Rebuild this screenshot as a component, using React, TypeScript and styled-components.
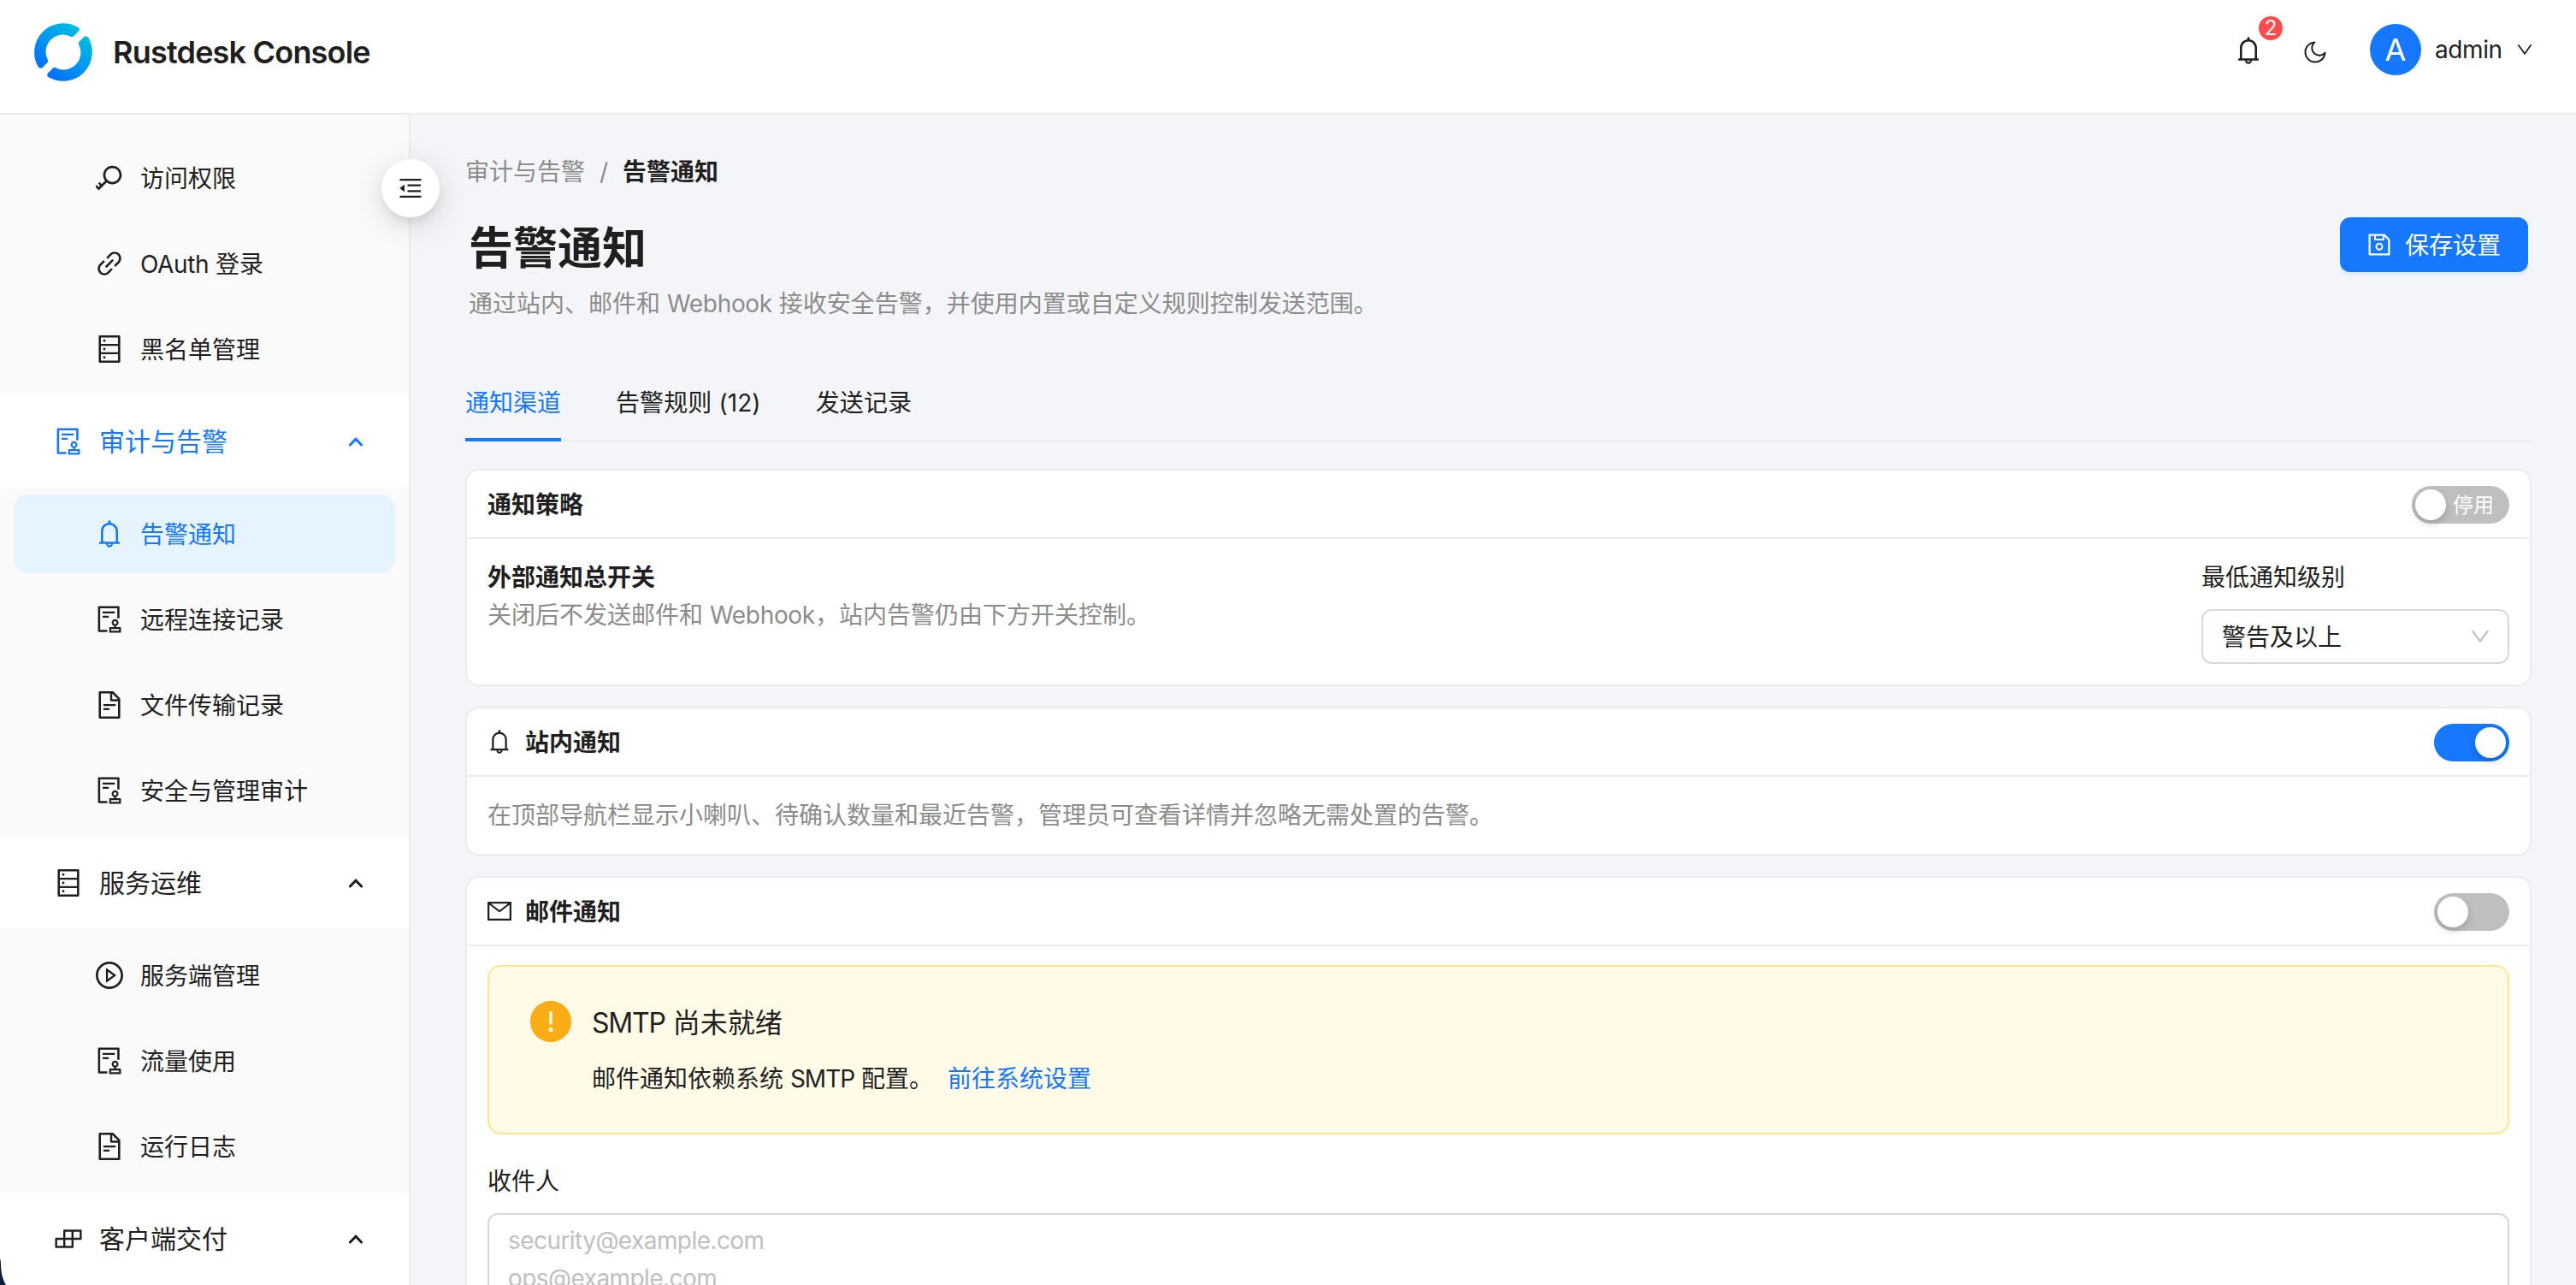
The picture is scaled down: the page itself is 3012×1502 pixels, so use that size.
import React from "react";
import styled, { createGlobalStyle, css } from "styled-components";
import {
  AiOutlineKey,
  AiOutlineLink,
  AiOutlineDatabase,
  AiOutlineAudit,
  AiOutlineBell,
  AiOutlineFileText,
  AiOutlinePlayCircle,
  AiOutlineBuild,
  AiOutlineMenuFold,
  AiOutlineMoon,
  AiOutlineDown,
  AiOutlineSave,
  AiOutlineMail,
  AiFillExclamationCircle,
} from "react-icons/ai";
import type { IconType } from "react-icons";

const colors = {
  primary: "#1677ff",
  text: "#1f1f1f",
  muted: "#8c8c8c",
  line: "#ebebf0",
  page: "#f4f5f9",
  placeholder: "#bfbfbf",
};

const GlobalStyle = createGlobalStyle`
  *, *::before, *::after { box-sizing: border-box; }
  body {
    margin: 0;
    overflow: hidden;
    background: ${colors.page};
    color: ${colors.text};
    font-family: Inter, "Noto Sans CJK SC", sans-serif;
    font-size: 28px;
    line-height: 44px;
    -webkit-font-smoothing: antialiased;
  }
`;

const Window = styled.div`
  position: relative;
  display: flex;
  flex-direction: column;
  width: 100vw;
  height: 100vh;
  overflow: hidden;
`;

const Header = styled.header`
  display: flex;
  flex: none;
  align-items: flex-start;
  justify-content: space-between;
  height: 134px;
  padding: 27px 50px 0 40px;
  background: #fff;
  border-bottom: 2px solid ${colors.line};
`;

const Brand = styled.div`
  display: flex;
  align-items: center;
  gap: 24px;
  height: 68px;
`;

const BrandName = styled.h1`
  margin: 0;
  font-size: 36px;
  font-weight: 600;
  letter-spacing: -0.8px;
`;

const HeaderActions = styled.div`
  display: flex;
  align-items: center;
  height: 62px;
`;

const IconSlot = styled.span<{ $size: number }>`
  display: inline-flex;
  flex: none;
  width: ${(p) => p.$size}px;
  height: ${(p) => p.$size}px;
  svg {
    width: 100%;
    height: 100%;
  }
`;

const BellButton = styled.div`
  position: relative;
  display: flex;
  margin: 2px 48px 0 0;
`;

const Badge = styled.span`
  position: absolute;
  left: 28px;
  top: -24px;
  width: 28px;
  height: 28px;
  border-radius: 50%;
  background: #ff4d4f;
  color: #fff;
  font-size: 24px;
  line-height: 28px;
  text-align: center;
`;

const MoonButton = styled.div`
  display: flex;
  margin: 6px 50px 0 0;
`;

const Avatar = styled.div`
  width: 60px;
  height: 60px;
  margin-right: 16px;
  border-radius: 50%;
  background: ${colors.primary};
  color: #fff;
  font-size: 36px;
  line-height: 60px;
  text-align: center;
`;

const UserName = styled.span`
  width: 79px;
  margin-right: 16px;
  letter-spacing: -0.4px;
`;

const Body = styled.div`
  display: flex;
  flex: 1;
  min-height: 0;
`;

const Sider = styled.aside`
  position: relative;
  flex: none;
  width: 480px;
  background: #fff;
  border-right: 2px solid ${colors.line};
`;

const CollapseButton = styled.button`
  position: absolute;
  top: 52px;
  right: -36px;
  display: flex;
  align-items: center;
  justify-content: center;
  width: 68px;
  height: 68px;
  padding: 0;
  border: 0;
  border-radius: 50%;
  background: #fff;
  color: ${colors.text};
  box-shadow: 0 8px 16px -6px rgba(0, 0, 0, 0.12), 0 8px 36px rgba(0, 0, 0, 0.14);
`;

const SubMenu = styled.ul<{ $scrolled?: boolean }>`
  display: flex;
  flex-direction: column;
  gap: 8px;
  margin: 0;
  padding: ${(p) => (p.$scrolled ? 28 : 8)}px 16px 8px;
  background: #fafafa;
  list-style: none;
`;

const MenuItem = styled.li<{ $active?: boolean }>`
  display: flex;
  align-items: center;
  gap: 20px;
  height: 92px;
  padding-left: 96px;
  border-radius: 16px;
  ${(p) =>
    p.$active &&
    css`
      background: #e6f4ff;
      color: ${colors.primary};
    `}
`;

const MenuTitle = styled.div<{ $active?: boolean }>`
  display: flex;
  align-items: center;
  gap: 20px;
  height: 108px;
  padding: 0 54px 0 64px;
  font-size: 30px;
  color: ${(p) => (p.$active ? colors.primary : colors.text)};
`;

const GroupLabel = styled.span`
  flex: 1;
`;

const MenuLabel = styled.span`
  flex: 1;
  padding-top: 2px;
`;

const Latin = styled.span<{ $tracking: number }>`
  letter-spacing: ${(p) => p.$tracking}px;
`;

const Main = styled.main`
  display: flex;
  flex: 1;
  flex-direction: column;
  min-width: 0;
  padding: 45px 52px 0 64px;
`;

const Breadcrumb = styled.nav`
  display: flex;
  gap: 17px;
  height: 44px;
  color: ${colors.muted};
`;

const Crumb = styled.span<{ $current?: boolean }>`
  ${(p) =>
    p.$current &&
    css`
      color: ${colors.text};
      font-weight: 600;
    `}
`;

const PageHeader = styled.div`
  display: flex;
  align-items: flex-start;
  justify-content: space-between;
  height: 154px;
  padding: 31px 4px 0;
`;

const PageTitle = styled.h2`
  margin: 1px 0 6px;
  font-size: 52px;
  font-weight: 600;
  line-height: 72px;
`;

const Muted = styled.div`
  color: ${colors.muted};
`;

const SaveButton = styled.button`
  display: flex;
  align-items: center;
  gap: 16px;
  height: 64px;
  padding: 0 32px;
  border: 0;
  border-radius: 12px;
  background: ${colors.primary};
  box-shadow: 0 4px 0 rgba(5, 145, 255, 0.1);
  color: #fff;
  font: inherit;
`;

const ButtonText = styled.span`
  padding-top: 2px;
`;

const Tabs = styled.div`
  display: flex;
  gap: 64px;
  height: 92px;
  margin: 47px 0 32px;
  border-bottom: 2px solid ${colors.line};
`;

const Tab = styled.div<{ $active?: boolean }>`
  height: 92px;
  padding-top: 25px;
  letter-spacing: 0.1px;
  ${(p) =>
    p.$active &&
    css`
      border-bottom: 4px solid ${colors.primary};
      color: ${colors.primary};
      letter-spacing: 0;
    `}
`;

const CardList = styled.div`
  display: flex;
  flex-direction: column;
  gap: 24px;
`;

const Card = styled.section`
  border: 2px solid ${colors.line};
  border-radius: 16px;
  background: #fff;
`;

const CardHead = styled.div`
  display: flex;
  align-items: center;
  justify-content: space-between;
  height: 80px;
  margin-bottom: -2px;
  padding: 2px 24px 0;
  border-bottom: 2px solid ${colors.line};
`;

const CardTitle = styled.h3`
  display: flex;
  align-items: center;
  gap: 16px;
  margin: 0;
  font-size: 28px;
  font-weight: 600;
`;

const TitleIcon = styled.span`
  display: flex;
  margin-top: -2px;
`;

const CardBody = styled.div`
  padding: 24px;
`;

const PolicyRow = styled.div`
  display: flex;
  justify-content: space-between;
  height: 124px;
`;

const PolicyText = styled.div`
  padding-top: 1px;
`;

const Strong = styled.div`
  font-weight: 600;
`;

const LevelField = styled.div`
  width: 360px;
  padding-top: 1px;
`;

const Select = styled.div`
  display: flex;
  align-items: center;
  justify-content: space-between;
  height: 64px;
  margin-top: 15px;
  padding: 0 20px 0 22px;
  border: 2px solid #d9d9d9;
  border-radius: 12px;
  svg {
    color: ${colors.placeholder};
  }
`;

const SelectValue = styled.span`
  padding-top: 1px;
`;

const InlineNote = styled(Muted)`
  height: 44px;
  padding-top: 1px;
`;

const SwitchTrack = styled.span<{ $on?: boolean }>`
  display: flex;
  flex-direction: ${(p) => (p.$on ? "row-reverse" : "row")};
  align-items: center;
  gap: 8px;
  min-width: 88px;
  height: 44px;
  padding: 0 4px;
  border-radius: 22px;
  background: ${(p) => (p.$on ? colors.primary : "#bfbfbf")};
`;

const SwitchKnob = styled.span`
  width: 36px;
  height: 36px;
  border-radius: 50%;
  background: #fff;
  box-shadow: 0 4px 8px rgba(0, 35, 11, 0.2);
`;

const SwitchText = styled.span`
  padding: 1px 14px 0 0;
  color: #fff;
  font-size: 24px;
`;

const Alert = styled.div`
  display: flex;
  gap: 24px;
  height: 198px;
  padding: 40px 48px;
  border: 2px solid #ffe58f;
  border-radius: 16px;
  background: #fffbe6;
`;

const WarningIcon = styled(IconSlot)`
  color: #faad14;
`;

const AlertTitle = styled.div`
  margin: 1px 0 15px;
  font-size: 32px;
  line-height: 50px;
`;

const AlertText = styled.div`
  display: flex;
  align-items: center;
  gap: 17px;
  height: 50px;
`;

const Link = styled.a`
  color: ${colors.primary};
`;

const FieldLabel = styled.label`
  display: block;
  margin: 33px 0 15px;
`;

const TextArea = styled.div`
  height: 200px;
  padding: 8px 22px;
  border: 2px solid #d9d9d9;
  border-radius: 12px;
  color: ${colors.placeholder};
  letter-spacing: -0.56px;
  white-space: pre-line;
`;

const WindowCorner = styled.svg`
  position: absolute;
  left: 0;
  bottom: 0;
  width: 8px;
  height: 44px;
`;

const Icon = ({ as: Glyph, size = 32 }: { as: IconType; size?: number }) => (
  <IconSlot $size={size}>
    <Glyph viewBox="64 64 896 896" />
  </IconSlot>
);

const ringHalf =
  "M50.6 4.4A34 34 0 0 0 4.4 50.6C5 52.4 7.7 53.8 9.6 52L14.8 46.8Q16.7 45 16.1 43.3A20 20 0 0 1 43.3 16.1Q45 16.7 46.8 14.8L52 9.6C53.8 7.7 52.4 5 50.6 4.4Z";

const Logo = () => (
  <svg width="68" height="68" viewBox="0 0 68 68">
    <defs>
      <linearGradient id="upper" x1="10" y1="56" x2="50" y2="6" gradientUnits="userSpaceOnUse">
        <stop offset="0" stopColor="#0071ff" />
        <stop offset="1" stopColor="#00bde1" />
      </linearGradient>
      <linearGradient id="lower" x1="50" y1="6" x2="10" y2="56" gradientUnits="userSpaceOnUse">
        <stop offset="0" stopColor="#0071ff" />
        <stop offset="1" stopColor="#00bde1" />
      </linearGradient>
    </defs>
    <path d={ringHalf} fill="url(#upper)" />
    <path d={ringHalf} fill="url(#lower)" transform="rotate(180 34 34)" />
  </svg>
);

const Caret = () => (
  <svg width="16" height="12" viewBox="0 0 16 12" fill="none">
    <path d="M1.4 10 8 3.2 14.6 10" stroke="currentColor" strokeWidth="3" strokeLinecap="round" />
  </svg>
);

const Switch = ({ on, text }: { on?: boolean; text?: string }) => (
  <SwitchTrack $on={on}>
    <SwitchKnob />
    {text && <SwitchText>{text}</SwitchText>}
  </SwitchTrack>
);

type Entry = { icon: IconType; label: React.ReactNode; active?: boolean };

const Entries = ({ items, scrolled }: { items: Entry[]; scrolled?: boolean }) => (
  <SubMenu $scrolled={scrolled}>
    {items.map((item, index) => (
      <MenuItem key={index} $active={item.active}>
        <Icon as={item.icon} />
        <MenuLabel>{item.label}</MenuLabel>
      </MenuItem>
    ))}
  </SubMenu>
);

const GroupTitle = ({ icon, label, active }: Entry) => (
  <MenuTitle $active={active}>
    <Icon as={icon} />
    <GroupLabel>{label}</GroupLabel>
    <Caret />
  </MenuTitle>
);

const accessItems: Entry[] = [
  { icon: AiOutlineKey, label: "访问权限" },
  {
    icon: AiOutlineLink,
    label: (
      <>
        <Latin $tracking={-0.4}>OAuth</Latin> 登录
      </>
    ),
  },
  { icon: AiOutlineDatabase, label: "黑名单管理" },
];

const auditItems: Entry[] = [
  { icon: AiOutlineBell, label: "告警通知", active: true },
  { icon: AiOutlineAudit, label: "远程连接记录" },
  { icon: AiOutlineFileText, label: "文件传输记录" },
  { icon: AiOutlineAudit, label: "安全与管理审计" },
];

const serviceItems: Entry[] = [
  { icon: AiOutlinePlayCircle, label: "服务端管理" },
  { icon: AiOutlineAudit, label: "流量使用" },
  { icon: AiOutlineFileText, label: "运行日志" },
];

export default function App() {
  return (
    <Window>
      <GlobalStyle />
      <Header>
        <Brand>
          <Logo />
          <BrandName>Rustdesk Console</BrandName>
        </Brand>
        <HeaderActions>
          <BellButton>
            <Icon as={AiOutlineBell} />
            <Badge>2</Badge>
          </BellButton>
          <MoonButton>
            <Icon as={AiOutlineMoon} size={28} />
          </MoonButton>
          <Avatar>A</Avatar>
          <UserName>admin</UserName>
          <Icon as={AiOutlineDown} size={20} />
        </HeaderActions>
      </Header>
      <Body>
        <Sider>
          <Entries items={accessItems} scrolled />
          <GroupTitle icon={AiOutlineAudit} label="审计与告警" active />
          <Entries items={auditItems} />
          <GroupTitle icon={AiOutlineDatabase} label="服务运维" />
          <Entries items={serviceItems} />
          <GroupTitle icon={AiOutlineBuild} label="客户端交付" />
          <CollapseButton>
            <Icon as={AiOutlineMenuFold} size={28} />
          </CollapseButton>
        </Sider>
        <Main>
          <Breadcrumb>
            <Crumb>审计与告警</Crumb>
            <span>/</span>
            <Crumb $current>告警通知</Crumb>
          </Breadcrumb>
          <PageHeader>
            <div>
              <PageTitle>告警通知</PageTitle>
              <Muted>
                通过站内、邮件和 <Latin $tracking={-0.3}>Webhook</Latin> 接收安全告警，并使用内置或自定义规则控制发送范围。
              </Muted>
            </div>
            <SaveButton>
              <Icon as={AiOutlineSave} size={28} />
              <ButtonText>保存设置</ButtonText>
            </SaveButton>
          </PageHeader>
          <Tabs>
            <Tab $active>通知渠道</Tab>
            <Tab>告警规则 (12)</Tab>
            <Tab>发送记录</Tab>
          </Tabs>
          <CardList>
            <Card>
              <CardHead>
                <CardTitle>通知策略</CardTitle>
                <Switch text="停用" />
              </CardHead>
              <CardBody>
                <PolicyRow>
                  <PolicyText>
                    <Strong>外部通知总开关</Strong>
                    <Muted>
                      关闭后不发送邮件和 <Latin $tracking={-0.3}>Webhook</Latin>，站内告警仍由下方开关控制。
                    </Muted>
                  </PolicyText>
                  <LevelField>
                    最低通知级别
                    <Select>
                      <SelectValue>警告及以上</SelectValue>
                      <Icon as={AiOutlineDown} size={24} />
                    </Select>
                  </LevelField>
                </PolicyRow>
              </CardBody>
            </Card>
            <Card>
              <CardHead>
                <CardTitle>
                  <TitleIcon>
                    <Icon as={AiOutlineBell} size={28} />
                  </TitleIcon>
                  站内通知
                </CardTitle>
                <Switch on />
              </CardHead>
              <CardBody>
                <InlineNote>在顶部导航栏显示小喇叭、待确认数量和最近告警，管理员可查看详情并忽略无需处置的告警。</InlineNote>
              </CardBody>
            </Card>
            <Card>
              <CardHead>
                <CardTitle>
                  <TitleIcon>
                    <Icon as={AiOutlineMail} size={28} />
                  </TitleIcon>
                  邮件通知
                </CardTitle>
                <Switch />
              </CardHead>
              <CardBody>
                <Alert>
                  <WarningIcon $size={48}>
                    <AiFillExclamationCircle viewBox="64 64 896 896" />
                  </WarningIcon>
                  <div>
                    <AlertTitle>
                      <Latin $tracking={-1.2}>SMTP</Latin> 尚未就绪
                    </AlertTitle>
                    <AlertText>
                      <span>
                        邮件通知依赖系统 <Latin $tracking={-1}>SMTP</Latin> 配置。
                      </span>
                      <Link>前往系统设置</Link>
                    </AlertText>
                  </div>
                </Alert>
                <FieldLabel>收件人</FieldLabel>
                <TextArea>{"security@example.com\nops@example.com"}</TextArea>
              </CardBody>
            </Card>
          </CardList>
        </Main>
      </Body>
      <WindowCorner viewBox="0 0 8 44">
        <path d="M0 14C0.8 14 1 18 1.2 24C1.8 33 4 39 7 44H0Z" fill="#0b2036" />
      </WindowCorner>
    </Window>
  );
}
